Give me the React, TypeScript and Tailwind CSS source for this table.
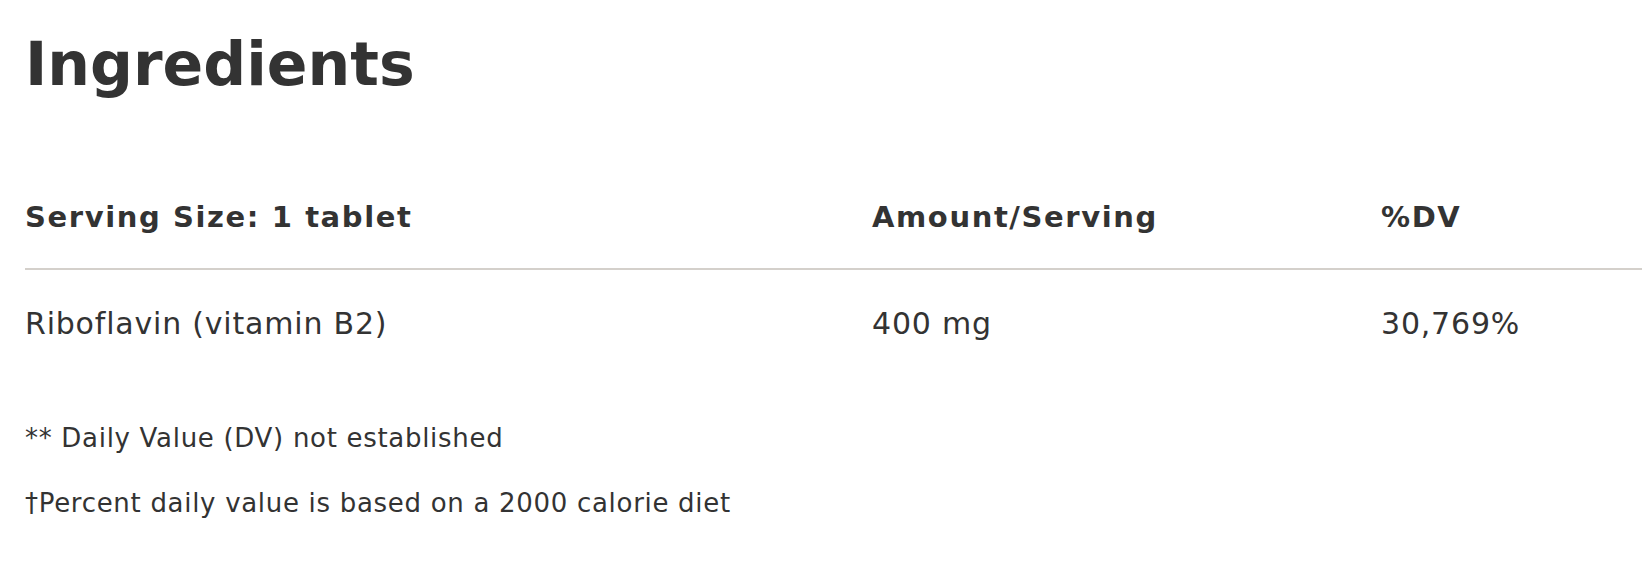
const rows = [
  { name: "Riboflavin (vitamin B2)", amount: "400 mg", dv: "30,769%" },
];

const notes = [
  "** Daily Value (DV) not established",
  "†Percent daily value is based on a 2000 calorie diet",
];

export default function App() {
  return (
    <div className="min-h-[576px] bg-white pl-[25px] pt-[26px] text-[#333333] [font-family:'DejaVu_Sans','Noto_Sans',sans-serif]">
      <h1 className="text-[60px] font-bold leading-[76px]">
        Ingredients
      </h1>
      <table className="mt-[99px] w-full table-fixed border-collapse text-left">
        <colgroup>
          <col className="w-[847px]" />
          <col className="w-[509px]" />
          <col />
        </colgroup>
        <thead>
          <tr className="border-b-2 border-[#d4d0cb]">
            <th className="pb-[35px] text-[29px] font-bold leading-[32px] tracking-[1.6px]">
              Serving Size: 1 tablet
            </th>
            <th className="pb-[35px] text-[29px] font-bold leading-[32px] tracking-[1.6px]">
              Amount/Serving
            </th>
            <th className="pb-[35px] text-[29px] font-bold leading-[32px] tracking-[1.6px]">
              %DV
            </th>
          </tr>
        </thead>
        <tbody>
          {rows.map((row) => (
            <tr key={row.name}>
              <td className="pt-[38px] text-[30px] font-normal leading-[32px] tracking-[0.8px]">
                {row.name}
              </td>
              <td className="pt-[38px] text-[30px] font-normal leading-[32px] tracking-[0.8px]">
                {row.amount}
              </td>
              <td className="pt-[38px] text-[30px] font-normal leading-[32px] tracking-[0.8px]">
                {row.dv}
              </td>
            </tr>
          ))}
        </tbody>
      </table>
      <div className="mt-[83px] flex flex-col gap-[35px] text-[26px] leading-[30px] tracking-[0.7px]">
        {notes.map((note) => (
          <p key={note}>{note}</p>
        ))}
      </div>
    </div>
  );
}
